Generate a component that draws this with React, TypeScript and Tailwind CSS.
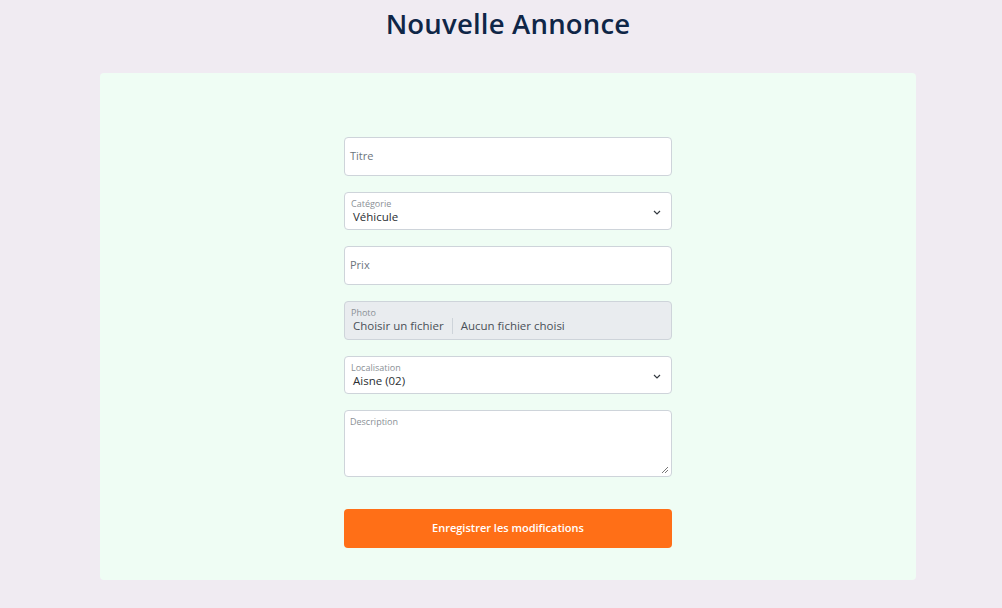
import React from 'react';

const font = { fontFamily: '"Open Sans", "Liberation Sans", sans-serif' };

const Chevron: React.FC = () => (
  <svg width="8" height="5" viewBox="0 0 8 5" className="absolute right-[10px] top-[17px]">
    <path d="M1 1 L4 4 L7 1" fill="none" stroke="#343a40" strokeWidth="1.2" />
  </svg>
);

const FloatingField: React.FC<{ label: string; value: string; select?: boolean }> = ({ label, value, select }) => (
  <div className="relative h-[38px] rounded-[4px] border border-[#ced4da] bg-white">
    <div className="absolute left-[6px] top-[5px] text-[9px] leading-[12px] text-[#8a9096]">{label}</div>
    <div className="absolute left-[8px] top-[16px] text-[11.5px] leading-[16px] text-[#2b2f33]">{value}</div>
    {select && <Chevron />}
  </div>
);

const App: React.FC = () => {
  return (
    <div className="min-h-screen bg-[#f0ebf2] pl-[14px] flex flex-col items-center" style={font}>
      <h1 className="pt-[6px] h-[73px] text-[27.5px] leading-[36px] font-semibold text-[#0f2647] tracking-[0.2px]">
        Nouvelle Annonce
      </h1>
      <div className="w-[816px] h-[507px] rounded-[4px] bg-[#effdf4] pt-[64px]">
        <form className="w-[328px] mx-auto flex flex-col gap-[16px]" onSubmit={(e) => e.preventDefault()}>
          <div className="h-[39px] rounded-[4px] border border-[#ced4da] bg-white flex items-center px-[5px] text-[11px] text-[#6c757d]">
            Titre
          </div>
          <FloatingField label="Catégorie" value="Véhicule" select />
          <div className="h-[39px] rounded-[4px] border border-[#ced4da] bg-white flex items-center px-[5px] text-[11px] text-[#6c757d]">
            Prix
          </div>
          <div className="relative h-[39px] rounded-[4px] border border-[#ced4da] bg-[#e9ecef]">
            <div className="absolute left-[6px] top-[5px] text-[9px] leading-[12px] text-[#8a9096]">Photo</div>
            <div className="absolute left-[8px] top-[16px] flex items-center text-[11.5px] leading-[16px] text-[#495057]">
              <span className="pr-[8px] border-r border-[#ced4da]">Choisir un fichier</span>
              <span className="pl-[8px]">Aucun fichier choisi</span>
            </div>
          </div>
          <FloatingField label="Localisation" value="Aisne (02)" select />
          <div className="relative h-[67px] rounded-[4px] border border-[#ced4da] bg-white">
            <div className="absolute left-[5px] top-[5px] text-[9px] leading-[12px] text-[#8a9096]">Description</div>
            <svg width="8" height="8" viewBox="0 0 8 8" className="absolute right-[2px] bottom-[2px]">
              <path d="M7 1 L1 7 M7 4 L4 7" stroke="#777" strokeWidth="1" />
            </svg>
          </div>
          <button
            type="submit"
            className="mt-[16px] h-[39px] pb-[2px] rounded-[4px] bg-[#ff6f17] text-white text-[11px] leading-[16px] font-semibold"
          >
            Enregistrer les modifications
          </button>
        </form>
      </div>
    </div>
  );
};

export default App;
